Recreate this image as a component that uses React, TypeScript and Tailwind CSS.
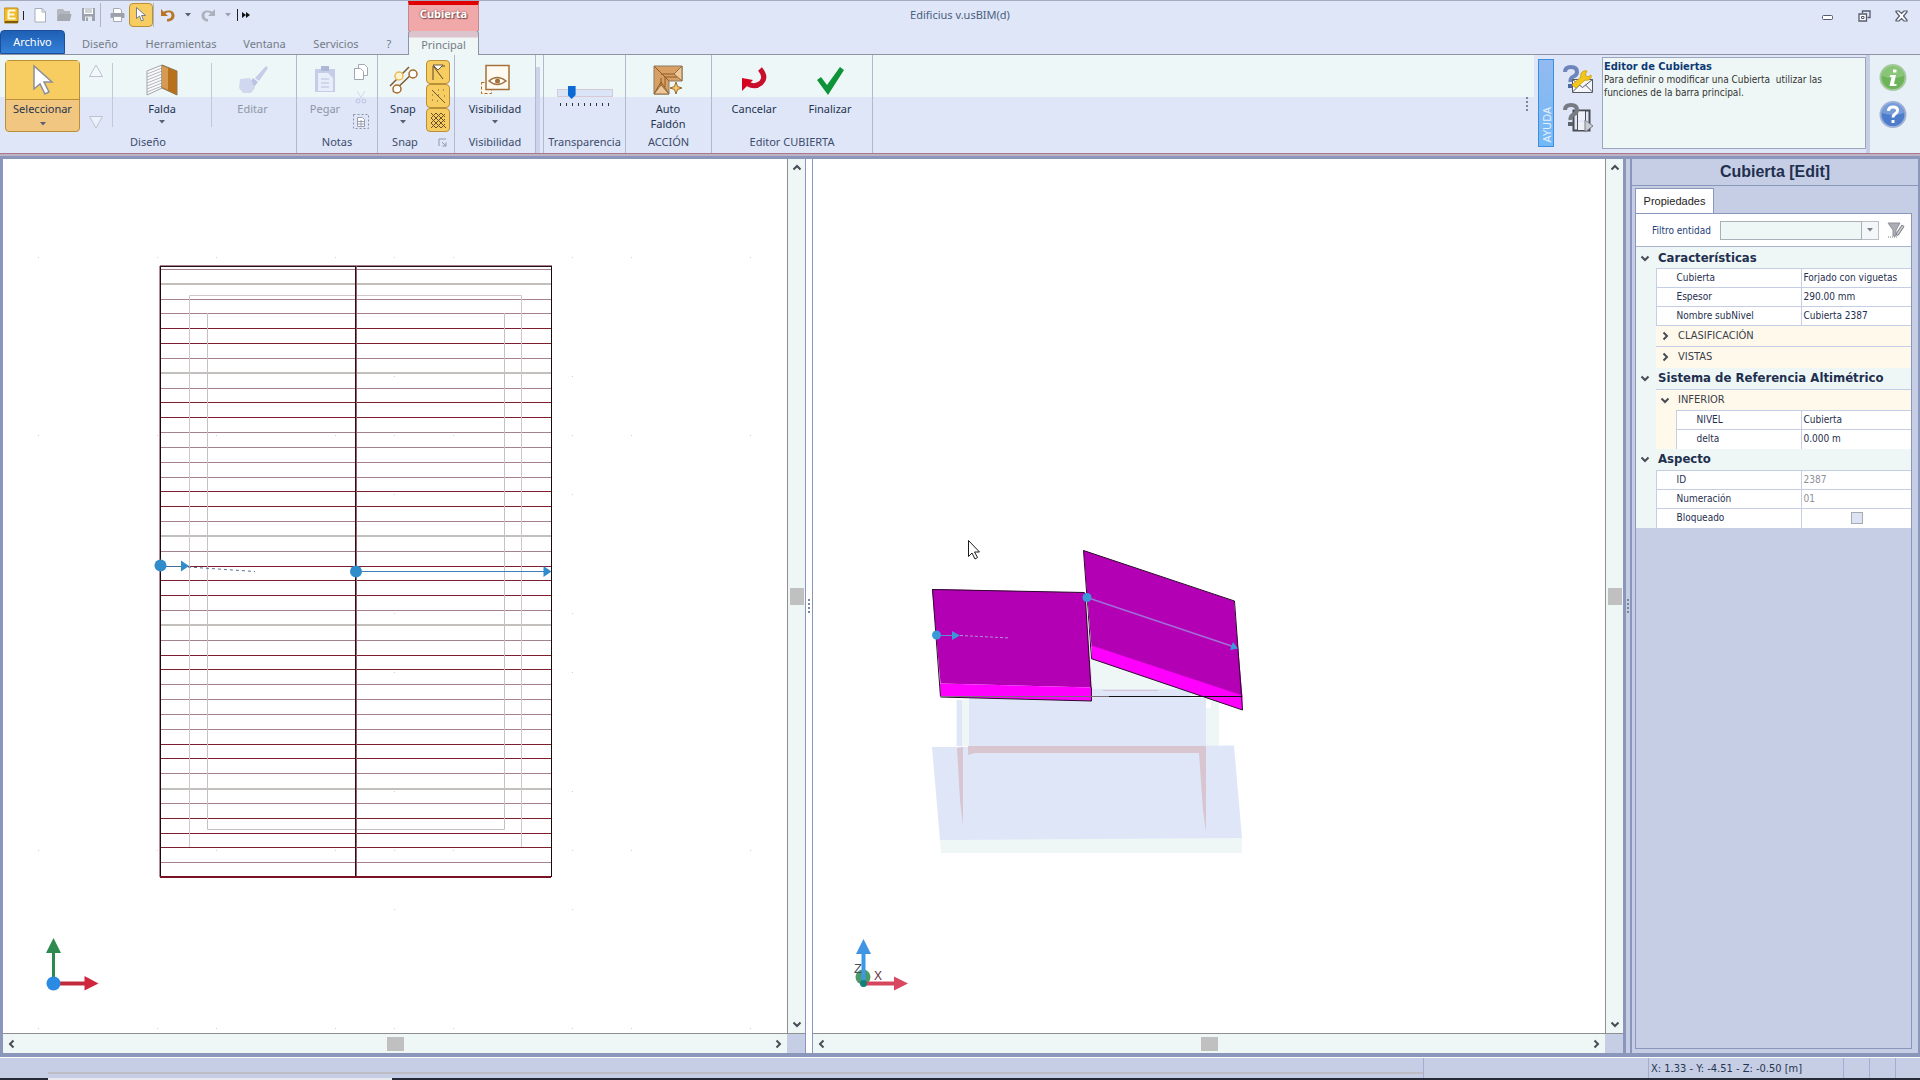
import React from "react";

type Kids = { children?: React.ReactNode };

const roofLines = "mgmmddmgmddmmmmddmgmdddmgmddmmmmddmgmdddm".split("");
const lineColor: Record<string, string> = { m: "#a5808f", g: "#c3bfbd", d: "#7c2030" };

function Caret({ className = "" }: { className?: string }) {
  return (
    <svg width="6" height="4" viewBox="0 0 6 4" className={className} aria-hidden="true">
      <path d="M0 0h6L3 3.5z" fill="#5a5f72" />
    </svg>
  );
}

function Chevron({ dir, className = "" }: { dir: "up" | "down" | "left" | "right"; className?: string }) {
  const d = {
    up: "M1.5 6.5 5 3l3.500 3.500",
    down: "M1.500 3.500 5 7l3.500-3.500",
    left: "M6.500 1.500 3 5l3.500 3.500",
    right: "M3.500 1.500 7 5 3.500 8.500",
  }[dir];
  return (
    <svg width="10" height="10" viewBox="0 0 10 10" className={className} aria-hidden="true">
      <path d={d} fill="none" stroke="#484c55" strokeWidth="2" />
    </svg>
  );
}

function QuickAccess() {
  return (
    <div className="flex h-full items-center pb-0.5 pl-1">
      <svg width="22" height="22" viewBox="0 0 22 22" aria-hidden="true">
        <rect x="0" y="4" width="14" height="15" rx="1" fill="#efbd2c" stroke="#b98a18" />
        <rect x="1" y="17" width="13" height="2" fill="#7a5b10" />
        <path d="M4.500 6.500h7M4.500 6.500v8h7M4.500 10.500h6" fill="none" stroke="#fff8e0" strokeWidth="2" />
        <path d="M19.500 7v9" stroke="#222" />
      </svg>
      <button aria-label="Nuevo" className="ml-0.5 flex w-6 justify-center">
        <svg width="14" height="16" viewBox="0 0 14 16"><path d="M2 1.500h7l3.500 3.500v10H2z" fill="#fff" stroke="#a6adba" /><path d="M9 1.500V5h3.500" fill="none" stroke="#a6adba" /></svg>
      </button>
      <button aria-label="Abrir" className="flex w-6 justify-center">
        <svg width="16" height="16" viewBox="0 0 16 16"><path d="M1 13V3l1-1h5l1.500 2H14v9z" fill="#b4b7be" /><path d="M3 7h12.500L14 14H1z" fill="#a4a8b0" /></svg>
      </button>
      <button aria-label="Guardar" className="flex w-6 justify-center">
        <svg width="15" height="15" viewBox="0 0 15 15"><path d="M1 1h13v13H2l-1-1z" fill="#9da3ae" /><path d="M3 1.500h9V7H3z" fill="#fff" /><path d="M4 3h7M4 5h7" stroke="#9da3ae" /><path d="M4 9.500h7V14H4z" fill="#e6eaf2" /><path d="M5 10.500h2V14H5z" fill="#9da3ae" /></svg>
      </button>
      <span className="h-6 w-px bg-[#b0b3c0]" />
      <button aria-label="Imprimir" className="ml-1 flex w-6 justify-center">
        <svg width="15" height="15" viewBox="0 0 15 15"><path d="M3.500 6V1.500h6L11.500 3v3" fill="#fff" stroke="#a4a8b2" /><rect x="0.500" y="6" width="14" height="5" rx="1" fill="#9ba0ab" /><path d="M3.500 9.500h8v5h-8z" fill="#fff" stroke="#a4a8b2" /></svg>
      </button>
      <button aria-label="Seleccionar" className="flex h-6 w-6 items-center justify-center rounded-sm border border-[#b98f37] bg-[#f7cd62]">
        <svg width="14" height="17" viewBox="0 0 14 17"><path d="M2.500 1.500v11l3-2.500 2 5 2-1-2-4.500h4z" fill="#fff" stroke="#777d8c" /></svg>
      </button>
      <span className="h-6 w-px bg-[#b0b3c0]" />
      <button aria-label="Deshacer" className="ml-0.5 flex w-6 justify-center">
        <svg width="16" height="16" viewBox="0 0 16 16"><path d="M1 2v7h7L5.500 6.500C9 4 12 6 11.500 9c-.3 2-2 3-4.500 3v2.500c5 0 7.500-2.500 7.500-6 0-5-6-6.500-10.800-3.700z" fill="#b97427" /></svg>
      </button>
      <button aria-label="Lista de deshacer" className="flex w-4 justify-center"><Caret /></button>
      <button aria-label="Rehacer" className="flex w-6 justify-center">
        <svg width="16" height="16" viewBox="0 0 16 16"><path d="M15 2v7H8l2.500-2.500C7 4 4 6 4.500 9c.3 2 1.500 3 3.500 3v2.500C4 14.500 1.500 12 1.500 8.500c0-5 6-6.500 10.800-3.700z" fill="#acb1bb" /></svg>
      </button>
      <button aria-label="Lista de rehacer" className="flex w-4 justify-center opacity-50"><Caret /></button>
      <button aria-label="Más comandos" className="flex w-5">
        <svg width="16" height="12" viewBox="0 0 16 12"><path d="M1.500 0v12" stroke="#222" /><path d="M6 3l4 3-4 3zM10 3l4 3-4 3z" fill="#111" /></svg>
      </button>
    </div>
  );
}

function TitleBar() {
  return (
    <header className="relative grid h-[30px] shrink-0 grid-cols-[1fr_auto_1fr] items-center border-t border-[#a4abc0]">
      <QuickAccess />
      <h1 className="text-[11px] text-[#4a6080]">Edificius v.usBIM(d)</h1>
      <div className="flex items-center justify-end gap-5 pr-3 text-[#555b6c]">
        <button aria-label="Minimizar"><svg width="12" height="12" viewBox="0 0 12 12"><rect x="0.500" y="5.500" width="10" height="4" rx="1" fill="#fff" stroke="currentColor" /></svg></button>
        <button aria-label="Restaurar" className="ml-1"><svg width="13" height="12" viewBox="0 0 13 12"><path d="M4.500 3V1h7.500v6.500h-2.500" fill="none" stroke="currentColor" strokeWidth="1.300" /><path d="M1 4h7.500v7H1z" fill="#fff" stroke="currentColor" strokeWidth="1.300" /><path d="M3.500 6.500h2.500v2H3.500z" fill="none" stroke="currentColor" /></svg></button>
        <button aria-label="Cerrar" className="ml-1"><svg width="13" height="12" viewBox="0 0 13 12"><path d="M1 1h3l2.500 2.500L9 1h3v1L8.500 6l3.500 4v1H9L6.500 8.500 4 11H1v-1l3.500-4L1 2z" fill="#fff" stroke="currentColor" strokeWidth="1.200" /></svg></button>
      </div>
      <div className="absolute top-0 left-[408px] flex h-[30px] w-[71px] items-center justify-center border-x border-t-4 border-x-[#c08a90] border-t-[#e00000] bg-[#f0a8a8] pb-2 text-[11px] font-bold text-white [text-shadow:0_0_2px_#7a4a4a,1px_1px_1px_#7a4a4a]">
        Cubierta
      </div>
    </header>
  );
}

function RibbonTabs() {
  const plain = "flex h-full items-center justify-center pt-1 text-[#757b88]";
  return (
    <nav className="flex h-[25px] shrink-0 border-b border-[#8f93a3] text-[11px]">
      <button className="flex w-[65px] items-center justify-center rounded-t-sm border border-[#1b4f9b] bg-linear-to-b from-[#1d5fb4] to-[#3580d8] text-white">Archivo</button>
      <button className={plain + " w-[70px]"}>Diseño</button>
      <button className={plain + " w-[92px]"}>Herramientas</button>
      <button className={plain + " w-[75px]"}>Ventana</button>
      <button className={plain + " w-[68px]"}>Servicios</button>
      <button className={plain + " w-[38px]"}>?</button>
      <button className="-mb-px flex w-[71px] items-center justify-center rounded-t-sm border border-b-0 border-[#8f93a3] bg-[linear-gradient(#dcc4cc_6px,#eef6f6_7px)] pt-1 text-[#757b88]">Principal</button>
    </nav>
  );
}

function Group({ label, width, children }: Kids & { label: string; width: string }) {
  return (
    <section aria-label={label} className={"flex shrink-0 flex-col border-r border-[#b3b9cc] pt-1 " + width}>
      <div className="flex h-[75px] px-1">{children}</div>
      <div className="text-center leading-4 text-[#3d4c6d]">{label}</div>
    </section>
  );
}

function BigButton({ label, second, caret, disabled, width, children }: Kids & { label: string; second?: string; caret?: boolean; disabled?: boolean; width: string }) {
  return (
    <button disabled={disabled} className={"flex shrink-0 flex-col items-center " + width + (disabled ? " text-[#9096a8]" : " text-[#27344f]")}>
      <span className="flex h-[42px] items-center justify-center">{children}</span>
      <span className="leading-[15px]">{label}</span>
      {second && <span className="leading-[15px]">{second}</span>}
      {caret && <Caret className="mt-1" />}
    </button>
  );
}

function Ribbon() {
  return (
    <div className="flex h-[98px] shrink-0 bg-[linear-gradient(#eef7f7_42px,#dee6f7_42px)] text-[11px]">
      <Group label="Diseño" width="w-[297px]">
        <button className="mt-px ml-px flex h-[72px] w-[75px] shrink-0 flex-col items-center rounded-sm border border-[#b98f37] bg-[#f1c680] text-[#27344f]">
          <span className="flex h-[39px] w-full items-center justify-center border-b border-[#b98f37] bg-[#f7cd62]">
            <svg width="24" height="32" viewBox="0 0 24 32"><path d="M3 2v23l6-5 5 10 4-2-5-10h8z" fill="#fff" stroke="#8b8f99" strokeWidth="1.500" /></svg>
          </span>
          <span className="leading-[18px]">Seleccionar</span>
          <Caret className="mt-1" />
        </button>
        <div className="flex w-8 shrink-0 flex-col items-center justify-between pt-1 pb-1">
          <button aria-label="Subir"><svg width="16" height="15" viewBox="0 0 16 15"><path d="M8 2l6.500 11.500h-13z" fill="#f4f7fb" stroke="#bcc2d0" /></svg></button>
          <button aria-label="Bajar"><svg width="16" height="15" viewBox="0 0 16 15"><path d="M8 13L1.500 1.500h13z" fill="#edf1fb" stroke="#bcc2d0" /></svg></button>
        </div>
        <span className="mt-1 h-16 w-px shrink-0 bg-[#c3c8d6]" />
        <BigButton label="Falda" caret width="w-[98px]">
          <svg width="34" height="32" viewBox="0 0 34 32">
            <path d="M2 7L17 1v23L2 31z" fill="#fbfbfb" stroke="#a0a3a8" />
            <path d="M2 10l15-6M2 13l15-6M2 16l15-6M2 19l15-6M2 22l15-6M2 25l15-6M2 28l15-6" stroke="#b2b5ba" />
            <path d="M17 1l15 6v24l-15-7z" fill="#b9701b" stroke="#8f744f" />
            <path d="M17 2l6 2v22l-6-3z" fill="#d69a55" />
          </svg>
        </BigButton>
        <span className="mt-1 h-16 w-px shrink-0 bg-[#c3c8d6]" />
        <BigButton label="Editar" disabled width="w-[81px]">
          <svg width="32" height="30" viewBox="0 0 32 30"><path d="M29 1l2 2-9 13-4-3z" fill="#c5cde8" /><path d="M16 13l5 4-4 5-6-2z" fill="#b9c3e2" /><path d="M3 14l10-1 5 10-4 5H6l-4-5z" fill="#d0d8ef" /></svg>
        </BigButton>
      </Group>

      <Group label="Notas" width="w-[81px]">
        <BigButton label="Pegar" disabled width="w-[48px]">
          <svg width="26" height="32" viewBox="0 0 26 32"><path d="M3 5h20v23H3z" fill="#c5cde8" /><path d="M9 2h8v5H9z" fill="#adb8d8" /><path d="M6 9h10l5 5v13H6z" fill="#e7edf9" /><path d="M9 15h8M9 19h8M9 23h8" stroke="#b5c0dd" /></svg>
        </BigButton>
        <div className="flex w-[26px] flex-col items-center justify-between pt-1 pb-1">
          <button aria-label="Copiar"><svg width="16" height="18" viewBox="0 0 16 18"><path d="M5.500 1.500h6l3 3v8h-9z" fill="#fff" stroke="#a0a6b2" /><path d="M1.500 5.500h6l3 3v8h-9z" fill="#fff" stroke="#a0a6b2" /></svg></button>
          <button aria-label="Cortar"><svg width="14" height="14" viewBox="0 0 14 14"><path d="M3 1l5 8M11 1L6 9" stroke="#d3daf0" /><circle cx="4" cy="11" r="2" fill="none" stroke="#bac3e0" /><circle cx="10" cy="11" r="2" fill="none" stroke="#bac3e0" /></svg></button>
          <button aria-label="Pegado especial"><svg width="18" height="17" viewBox="0 0 18 17"><rect x="1.500" y="1.500" width="15" height="14" fill="none" stroke="#8d93a2" strokeDasharray="2 2" /><path d="M5.500 4.500h5l2 2v7h-7z" fill="#fff" stroke="#9aa0af" /><path d="M6 8.500h6M6 11h6M9 7v6" stroke="#9aa0af" /></svg></button>
        </div>
      </Group>

      <section aria-label="Snap" className="flex w-[77px] shrink-0 flex-col border-r border-[#b3b9cc] pt-1">
        <div className="flex h-[75px] pl-0.5">
          <BigButton label="Snap" caret width="w-[46px]">
            <svg width="30" height="30" viewBox="0 0 30 30"><path d="M2 21L21 2M5 27L27 6" stroke="#7c5a34" strokeWidth="1.500" /><circle cx="11" cy="11" r="4" fill="#fff3cf" stroke="#e5bd5a" strokeWidth="1.500" /><circle cx="25" cy="9" r="4" fill="#fff" stroke="#a76a2a" strokeWidth="1.500" /><circle cx="9" cy="24" r="4" fill="#fff" stroke="#a76a2a" strokeWidth="1.500" /></svg>
          </BigButton>
          <div className="mt-px flex flex-col">
            <button aria-label="Snap a vértices" className="h-6 w-6 rounded-sm border border-[#b98f37] bg-[#f7cd62]"><svg width="22" height="22" viewBox="0 0 22 22"><path d="M6 19V5h12M7 6l9 12" fill="none" stroke="#5e4a2a" /><path d="M6 4h10l-5 5z" fill="#fff" stroke="#6b5a3d" /></svg></button>
            <button aria-label="Snap a puntos" className="h-6 w-6 rounded-sm border border-[#b98f37] bg-[#f7cd62]"><svg width="22" height="22" viewBox="0 0 22 22"><path d="M5 5l13 13" stroke="#6b5a3d" /><path d="M5 10h1M5 15h1M11 5h1M16 5h1M17 11h1M10 16h1M11 10h1" stroke="#6b5a3d" /></svg></button>
            <button aria-label="Snap a rejilla" className="h-6 w-6 rounded-sm border border-[#b98f37] bg-[#f7cd62]"><svg width="22" height="22" viewBox="0 0 22 22"><path d="M4 9l5-5M4 14L14 4M4 19L18 5M9 19l9-9M14 19l4-4M4 14l5 5M4 9l10 10M4 4l15 15M9 4l9 9M14 4l4 4" stroke="#6b5030" /></svg></button>
          </div>
        </div>
        <div className="flex items-center leading-4 text-[#3d4c6d]">
          <span className="w-[54px] text-center">Snap</span>
          <button aria-label="Opciones de Snap" className="ml-1.5"><svg width="9" height="9" viewBox="0 0 9 9"><path d="M1 8V1h7M4 4l4 4M8 4.500V8H4.500" fill="none" stroke="#8f97ae" /></svg></button>
        </div>
      </section>

      <Group label="Visibilidad" width="w-[81px]">
        <BigButton label="Visibilidad" caret width="w-[72px]">
          <svg width="34" height="32" viewBox="0 0 34 32"><path d="M3.500 18.500h10v11h-10z" fill="#fff6e8" stroke="#a76a2a" strokeDasharray="3 2" /><path d="M8 1.500h23v24H8z" fill="#fffaf0" stroke="#a3713b" strokeWidth="1.500" /><path d="M11 17q8-7 17 0-9 7-17 0z" fill="#fff" stroke="#a3713b" strokeWidth="1.500" /><circle cx="19.500" cy="17" r="2.500" fill="#a3713b" /></svg>
        </BigButton>
      </Group>
      <div className="w-2 shrink-0 border-r border-[#b3b9cc]"><div className="mt-3 h-[86px] w-1 bg-[#ccd3ea]" /></div>

      <Group label="Transparencia" width="w-[82px]">
        <div className="flex w-full flex-col items-center pt-7">
          <input type="range" aria-label="Transparencia" min={0} max={100} defaultValue={22}
            className="h-3 w-[56px] appearance-none bg-transparent [&::-webkit-slider-runnable-track]:h-2 [&::-webkit-slider-runnable-track]:border [&::-webkit-slider-runnable-track]:border-[#d6c9d6] [&::-webkit-slider-runnable-track]:bg-[#dbe5f8] [&::-webkit-slider-thumb]:-mt-1 [&::-webkit-slider-thumb]:h-[13px] [&::-webkit-slider-thumb]:w-2 [&::-webkit-slider-thumb]:appearance-none [&::-webkit-slider-thumb]:bg-[#0a6ad6] [&::-webkit-slider-thumb]:[clip-path:polygon(0_0,100%_0,100%_70%,50%_100%,0_70%)]" />
          <div className="mt-1 flex w-[49px] justify-between">
            {roofLines.slice(0, 9).map((_, i) => <span key={i} className="h-[3px] w-px bg-[#333]" />)}
          </div>
        </div>
      </Group>

      <Group label="ACCIÓN" width="w-[86px]">
        <BigButton label="Auto" second="Faldón" width="w-[76px]">
          <svg width="30" height="32" viewBox="0 0 30 32"><path d="M1 2h28v15H16v13H1z" fill="#d9a066" stroke="#8d7a63" /><path d="M1 2l11 11v10M12 13h12M12 13l4 4M8 14v9M8 10h16M1 30l7-12 8 12M29 2l-6 8 6 7" fill="none" stroke="#8c5a22" /><path d="M1 30l7-9 8 9z" fill="#eec89a" stroke="#8d6a43" /><path d="M29 2l-8 8 8 7z" fill="#eec89a" stroke="#8d6a43" /><path d="M23 18l1.500 4.500L29 24l-4.500 1.500L23 30l-1.500-4.500L17 24l4.500-1.500z" fill="#f4c66b" stroke="#9c6a2a" /></svg>
        </BigButton>
      </Group>

      <Group label="Editor CUBIERTA" width="w-[161px]">
        <BigButton label="Cancelar" width="w-[76px]">
          <svg width="32" height="32" viewBox="0 0 32 32"><path d="M22 5q7 8 1 14-6 5-13 1" fill="none" stroke="#c8102e" strokeWidth="5" /><path d="M4 14l11 2-11 11z" fill="#d6001f" /></svg>
        </BigButton>
        <BigButton label="Finalizar" width="w-[76px]">
          <svg width="32" height="32" viewBox="0 0 32 32"><path d="M3 16l4-3 6 8L26 3l4 3-16 25z" fill="#0d9338" /></svg>
        </BigButton>
      </Group>

      <div className="flex min-w-0 flex-1 items-center justify-end pr-1.5">
        <Dots />
      </div>
      <HelpArea />
    </div>
  );
}

function HelpArea() {
  return (
    <aside className="flex shrink-0 bg-[#dee6f7]">
      <div className="mt-1 ml-1 flex h-[88px] w-4 items-end justify-center border border-[#3b8fe0] bg-linear-to-b from-[#93baf0] to-[#72b8f6] pb-1">
        <span className="rotate-180 text-[11px] leading-none text-white/80 [writing-mode:vertical-rl]">AYUDA</span>
      </div>
      <div className="flex w-12 flex-col items-center gap-2.5 pt-2.5">
        <button aria-label="Soporte técnico">
          <svg width="32" height="28" viewBox="0 0 32 28"><path d="M3 7q0-5 6-5t6 5q0 3-3.500 4.500T8.500 17" fill="none" stroke="#6f86bd" strokeWidth="4" /><path d="M6 19h5v4H6z" fill="#4f669e" /><path d="M10.500 14.500h20v13h-20z" fill="#f4f6fa" stroke="#56595f" /><path d="M10.500 14.500l10 8 10-8M10.500 27l7-7M30.500 27l-7-7" fill="none" stroke="#56595f" /><path d="M10 20l9-8c-1-4 2-7 6-6l-2 4 3 2 3-2c1 4-3 6-6 5l-9 8z" fill="#f3c61c" stroke="#d1a512" /></svg>
        </button>
        <button aria-label="Vídeo de ayuda">
          <svg width="32" height="30" viewBox="0 0 32 30"><path d="M11.500 7.500h16v20h-16z" fill="none" stroke="#4b4e55" strokeWidth="2" /><path d="M15.500 8v20M23.500 8v20" stroke="#4b4e55" /><path d="M16 8.500h7v9h-7zM16 19h7v8h-7z" fill="#eef2f8" /><path d="M3 7q0-5 6-5t6 5q0 3-3.500 4.500T8.500 17" fill="none" stroke="#777b83" strokeWidth="4" /><path d="M6 19h5v4H6z" fill="#5d6168" /><path d="M23 17l8 6-8 6z" fill="#c9ccd2" stroke="#7b7e85" /></svg>
        </button>
      </div>
      <div className="mt-0.5 h-[92px] w-[264px] border border-[#9aa6bd] bg-[#eef7f6] px-px pt-0.5 font-['DejaVu_Sans_Condensed','DejaVu_Sans',sans-serif] text-[10px] leading-[13px] text-[#333]">
        <h2 className="text-[11px] font-bold text-[#0f3a75]">Editor de Cubiertas</h2>
        <p>Para definir o modificar una Cubierta&nbsp; utilizar las funciones de la barra principal.</p>
      </div>
      <div className="flex w-[54px] flex-col items-center gap-2 border-l-4 border-[#c6cee6] bg-[#e8f0f7] pt-2 pr-1">
        <button aria-label="Información">
          <svg width="28" height="29" viewBox="0 0 28 29"><circle cx="14" cy="14.500" r="12.500" fill="#6db35a" stroke="#a7c9a0" strokeWidth="2" /><path d="M3 13a11 11 0 0 1 22 0q-11 4-22 0z" fill="#9bd088" opacity=".6" /><path d="M14 6.500h3.500v3H14zM11.500 12h5.500l-2 9h2.500v2H10.500l2-9h-2z" fill="#fff" /></svg>
        </button>
        <button aria-label="Ayuda">
          <svg width="28" height="29" viewBox="0 0 28 29"><circle cx="14" cy="14.500" r="12.500" fill="#4c7ccb" stroke="#9eb0d6" strokeWidth="2" /><path d="M3 13a11 11 0 0 1 22 0q-11 4-22 0z" fill="#92b0e2" opacity=".6" /><path d="M9.500 11q0-4 4.500-4t4.500 3.500q0 2-2.500 3.500-2 1.500-2 3.500" fill="none" stroke="#fff" strokeWidth="3" /><path d="M12.500 20h3v3h-3z" fill="#fff" /></svg>
        </button>
      </div>
    </aside>
  );
}

function PlanDrawing() {
  const xs = [38, 157, 216, 335, 394, 453, 572, 631, 750];
  const ys = [257, 435, 850, 1028];
  return (
    <svg className="absolute inset-0 h-full w-full" role="img" aria-label="Planta de la cubierta">
      <g transform="translate(-3 -159)">
        {ys.map((y) => xs.map((x) => <rect key={x + "-" + y} x={x} y={y} width="1" height="1" fill="#cdd2d8" />))}
        {[376, 494, 613, 672, 791, 909].map((y) => [394, 572].map((x) => <rect key={x + "-" + y} x={x} y={y} width="1" height="1" fill="#cdd2d8" />))}
        {roofLines.map((c, i) => (
          <rect key={i} x="160" y={Math.round(269 + i * 14.83 - (c === "g" ? 0.5 : 0))} width="391" height={c === "g" ? 2 : 1} fill={lineColor[c]} />
        ))}
        <path d="M189.500 847V295.500H521.500V847" fill="none" stroke="#d3c5cb" />
        <path d="M207.500 313V829.500H504.500V313" fill="none" stroke="#c6bfc4" />
        <path d="M160.500 877V266M551.500 266V877" stroke="#1d0a10" strokeWidth="1" />
        <path d="M159.500 877V266" stroke="#b78c98" />
        <path d="M160 265.500H552" stroke="#a5808f" />
        <path d="M160 266.500H552" stroke="#2b1218" />
        <path d="M355.500 266V877" stroke="#2b0d14" />
        <path d="M356.500 266V877" stroke="#96606f" />
        <path d="M160 877H551" stroke="#7a1224" strokeWidth="2" />
        <path d="M166 566.500H182" stroke="#3f6f9c" />
        <path d="M188 567l67 4.500" stroke="#56718f" strokeDasharray="3 3" />
        <path d="M181 560.500l8 5.500-8 5.500z" fill="#318ccb" />
        <circle cx="160.500" cy="565.500" r="6" fill="#318ccb" />
        <path d="M361 571.500H545" stroke="#3c7fba" />
        <path d="M543.500 566l8 5.500-8 5.500z" fill="#318ccb" />
        <circle cx="356" cy="571.500" r="6" fill="#318ccb" />
        <path d="M53.500 982V950" stroke="#2c8a4c" strokeWidth="3" />
        <path d="M46 953l7.500-15 7.500 15z" fill="#2f8a50" />
        <path d="M58 983.500H86" stroke="#c22a3c" strokeWidth="4" />
        <path d="M84.500 976l14 7.500-14 7z" fill="#d0273f" />
        <circle cx="53.500" cy="983.500" r="7" fill="#2b8ae2" />
      </g>
    </svg>
  );
}

function ModelDrawing() {
  return (
    <svg className="absolute inset-0 h-full w-full" role="img" aria-label="Vista 3D de la cubierta">
      <g transform="translate(-813 -159)">
        <path d="M1091 655l120 42v48H1219V700H956v45h250V700l-114-1z" fill="#eef7f6" />
        <path d="M956 700h50v46h-50zM1206 708h13v38h-13z" fill="#eef7f6" />
        <path d="M969 698h237v49H969zM957 700h5v46h-5zM1092 689h98v10h-98z" fill="#dee6f7" />
        <path d="M940 839l302-1.500V853H941z" fill="#eef7f6" />
        <path d="M932 747l302-1.500 8 92.500-302 2z" fill="#dee6f7" />
        <path d="M968 746h238v86l-3-22-4-57H975l-7 2zM957 748l6-1v79l-3-26z" fill="#d8c5cf" />
        <path d="M1103 690.500h55" stroke="#d8c5cf" />
        <path d="M932 589l153 3.500 6.500 95-151-4z" fill="#b400b4" />
        <path d="M940 683.500l151.500 4V701l-151-4z" fill="#ff00ff" />
        <path d="M932.500 589.500l152 3M932.500 589l8 108 151 4V687" fill="none" stroke="#2d0a2d" />
        <path d="M1083.500 550.500L1234 601l8.500 96-151-50z" fill="#b400b4" />
        <path d="M1091.500 645.500l151 50V710l-151-51.300z" fill="#ff00ff" />
        <path d="M1091.500 658.700L1083.500 550.500 1234.500 601l8 109z" fill="none" stroke="#2d0a2d" />
        <path d="M1086 593l6 95" stroke="#e8d8ee" />
        <path d="M1085 593l6 95" stroke="#2d0a2d" />
        <path d="M940 696.500h170" stroke="#7b6b7b" />
        <path d="M1109 696.500h133" stroke="#111" />
        <path d="M940 635.500h14" stroke="#5890d0" />
        <path d="M960 635.500l50 2.500" stroke="#b890e0" strokeDasharray="3 2" />
        <path d="M952 631l8 4.500-8 4.500z" fill="#3a9ad8" />
        <circle cx="936.500" cy="635" r="4.500" fill="#3a9ad8" />
        <path d="M1087 597.500l146 49" stroke="#a070d8" strokeWidth="1.500" />
        <path d="M1233 642l5 6.500-8 1.500z" fill="#3a9ad8" />
        <circle cx="1087" cy="597.500" r="4.500" fill="#3a9ad8" />
        <path d="M968.500 540.500v16l3.500-3.500 3 6 2.500-1.500-3-5.500h5z" fill="#fff" stroke="#1b1b1b" />
        <circle cx="863" cy="977" r="7.500" fill="#4d9a68" />
        <path d="M863.500 981V952" stroke="#3d98e6" strokeWidth="4" />
        <path d="M856 954l7.500-15 7.500 15z" fill="#3f94e4" />
        <path d="M866 983.500H896" stroke="#d5455c" strokeWidth="4" />
        <path d="M894 976.500l14 7-14 7z" fill="#d84860" />
        <circle cx="863.500" cy="983.500" r="3.500" fill="#128078" />
        <text x="854" y="973" className="fill-[#4b4f5a] font-['Liberation_Sans',sans-serif] text-[13px]">Z</text>
        <text x="874" y="980" className="fill-[#66303f] font-['Liberation_Sans',sans-serif] text-[12px]">X</text>
      </g>
    </svg>
  );
}

function Viewport({ children, grow }: Kids & { grow: string }) {
  return (
    <div className={"grid min-w-0 grid-cols-[1fr_18px] grid-rows-[1fr_20px] bg-[#eef7f6] " + grow}>
      <div className="relative overflow-hidden bg-white">{children}</div>
      <div className="flex flex-col items-center justify-between border-l border-[#8f8f8f] py-1">
        <Chevron dir="up" />
        <span className="h-[17px] w-[14px] bg-[#c0c0c0]" />
        <Chevron dir="down" />
      </div>
      <div className="flex items-center justify-between border-t border-[#8f8f8f] px-1">
        <Chevron dir="left" />
        <span className="h-3.5 w-[17px] bg-[#c0c0c0]" />
        <Chevron dir="right" />
      </div>
      <div className="border-t border-[#8f8f8f] bg-[#c6cee6]" />
    </div>
  );
}

function Dots() {
  return (
    <span className="flex flex-col gap-0.5">
      <i className="size-0.5 bg-[#7f8797]" /><i className="size-0.5 bg-[#7f8797]" /><i className="size-0.5 bg-[#7f8797]" /><i className="size-0.5 bg-[#7f8797]" />
    </span>
  );
}

function Section({ children }: Kids) {
  return (
    <tr className="h-[22px] bg-[#eef7f6]">
      <th colSpan={4} scope="colgroup" className="text-left text-[13px] leading-4 font-bold">
        <button className="flex items-center"><Chevron dir="down" className="mr-2 ml-1" />{children}</button>
      </th>
    </tr>
  );
}

function SubSection({ open, children }: Kids & { open?: boolean }) {
  return (
    <tr className="h-[21px]">
      <td className="bg-[#eef7f6]" />
      <th colSpan={3} scope="colgroup" className="border-t border-[#c6cee6] bg-[#fff9ec] text-left text-[11px] font-normal text-[#3a3f4a]">
        <button className="flex items-center"><Chevron dir={open ? "down" : "right"} className="mr-2 ml-1" />{children}</button>
      </th>
    </tr>
  );
}

function Row({ name, nested, muted, children }: Kids & { name: string; nested?: boolean; muted?: boolean }) {
  const line = "border-t border-[#c6cee6] ";
  return (
    <tr className="h-[19px]">
      <td className="bg-[#eef7f6]" />
      {nested && <td className="bg-[#fff9ec]" />}
      <th colSpan={nested ? 1 : 2} scope="row" className={line + "truncate border-l bg-white pl-5 text-left font-normal"}>{name}</th>
      <td className={line + "border-l bg-white pl-0.5 whitespace-nowrap " + (muted ? "text-[#8b8f98]" : "")}>{children}</td>
    </tr>
  );
}

function PropertyPanel() {
  return (
    <aside className="flex w-[290px] shrink-0 flex-col border-r-2 border-l-2 border-[#8a97ba] bg-[#c6cee6] font-['DejaVu_Sans_Condensed','DejaVu_Sans',sans-serif] text-[10px] text-[#1f2f4f]">
      <h2 className="h-[27px] border-b border-[#8a97ba] text-center font-['Liberation_Sans',sans-serif] text-[16px] leading-[26px] font-bold text-[#22304e]">Cubierta [Edit]</h2>
      <div className="flex min-h-0 flex-1 flex-col pt-0.5 pr-1.5 pb-1 pl-[3px]">
        <div role="tablist" className="flex">
          <button role="tab" aria-selected="true" className="-mb-px h-[26px] w-[79px] border border-b-0 border-[#8a97ba] bg-white font-['Liberation_Sans',sans-serif] text-[11px] text-[#222]">Propiedades</button>
        </div>
        <div className="flex min-h-0 flex-1 flex-col border border-[#8a97ba]">
          <div className="flex h-8 shrink-0 items-center bg-white pl-4">
            <label htmlFor="filter" className="w-[68px] whitespace-nowrap text-[#23407a]">Filtro entidad</label>
            <select id="filter" className="h-[19px] w-[142px] appearance-none border border-[#a9b0b8] bg-[#eef7f6]" />
            <span className="-ml-px flex h-[19px] w-[18px] items-center justify-center border border-[#a9b0b8] bg-[#f2f6fa] opacity-80"><Caret /></span>
            <button aria-label="Editar filtro" className="ml-2">
              <svg width="18" height="16" viewBox="0 0 18 16"><path d="M1 1h12L9 8v6H6V8z" fill="#aaaeb4" stroke="#8e9298" /><path d="M9 12l6-9 2 1.500-6 9z" fill="#c6c9ce" stroke="#777b82" /><path d="M1 15h9" stroke="#777b82" strokeDasharray="1 1" /></svg>
            </button>
          </div>
          <table className="w-full table-fixed border-collapse border-t border-[#a9b3cc] leading-[14px]">
            <colgroup><col className="w-5" /><col className="w-5" /><col className="w-[125px]" /><col /></colgroup>
            <tbody>
              <Section>Características</Section>
              <Row name="Cubierta">Forjado con viguetas</Row>
              <Row name="Espesor">290.00 mm</Row>
              <Row name="Nombre subNivel">Cubierta 2387</Row>
              <SubSection>CLASIFICACIÓN</SubSection>
              <SubSection>VISTAS</SubSection>
              <Section>Sistema de Referencia Altimétrico</Section>
              <SubSection open>INFERIOR</SubSection>
              <Row nested name="NIVEL">Cubierta</Row>
              <Row nested name="delta">0.000 m</Row>
              <Section>Aspecto</Section>
              <Row name="ID" muted>2387</Row>
              <Row name="Numeración" muted>01</Row>
              <Row name="Bloqueado"><input type="checkbox" aria-label="Bloqueado" className="mx-auto block size-3 appearance-none border border-[#a9a9ae] bg-[#dbe3f5]" /></Row>
            </tbody>
          </table>
        </div>
      </div>
    </aside>
  );
}

function StatusBar() {
  return (
    <footer className="flex h-[23px] shrink-0 flex-col border-t border-t-white bg-[#c6cee6] font-['DejaVu_Sans_Condensed','DejaVu_Sans',sans-serif] text-[11px] leading-[22px] text-[#27344f]">
      <div className="flex min-h-0 flex-1">
        <div className="flex flex-1 items-end border-r border-[#a5add0] pb-1 pl-12"><span className="h-0.5 w-full bg-[#bfbdc4]" /></div>
        <div className="w-[225px] border-r border-[#a5add0]" />
        <div className="w-[195px] border-r border-[#a5add0] pl-0.5">X: 1.33 - Y: -4.51 - Z: -0.50 [m]</div>
        <div className="w-[26px] border-r border-[#a5add0]" />
        <div className="w-[26px] border-r border-[#a5add0]" />
        <div className="w-6" />
      </div>
      <div className="h-0.5 shrink-0 bg-[#252a36] pl-12"><div className="h-full w-[344px] bg-[#e8e8ee]" /></div>
    </footer>
  );
}

export default function App() {
  return (
    <div className="flex h-screen flex-col overflow-hidden bg-[#dee6f7] font-['Noto_Sans',sans-serif]">
      <TitleBar />
      <RibbonTabs />
      <Ribbon />
      <div className="h-[3px] shrink-0 border-t border-[#a8788c] bg-[#beb2c4]" />
      <main className="flex min-h-0 flex-1 border-t-[3px] border-b-4 border-l-[3px] border-[#8a97ba] bg-[#dee6f7]">
        <Viewport grow="flex-[802]"><PlanDrawing /></Viewport>
        <div className="flex w-2 shrink-0 items-center justify-center border-x border-[#8a97ba] bg-white"><Dots /></div>
        <Viewport grow="flex-[810]"><ModelDrawing /></Viewport>
        <div className="flex w-[7px] shrink-0 items-center justify-center border-l-[3px] border-[#8a97ba] bg-[#c6cee6]"><Dots /></div>
        <PropertyPanel />
      </main>
      <StatusBar />
    </div>
  );
}
